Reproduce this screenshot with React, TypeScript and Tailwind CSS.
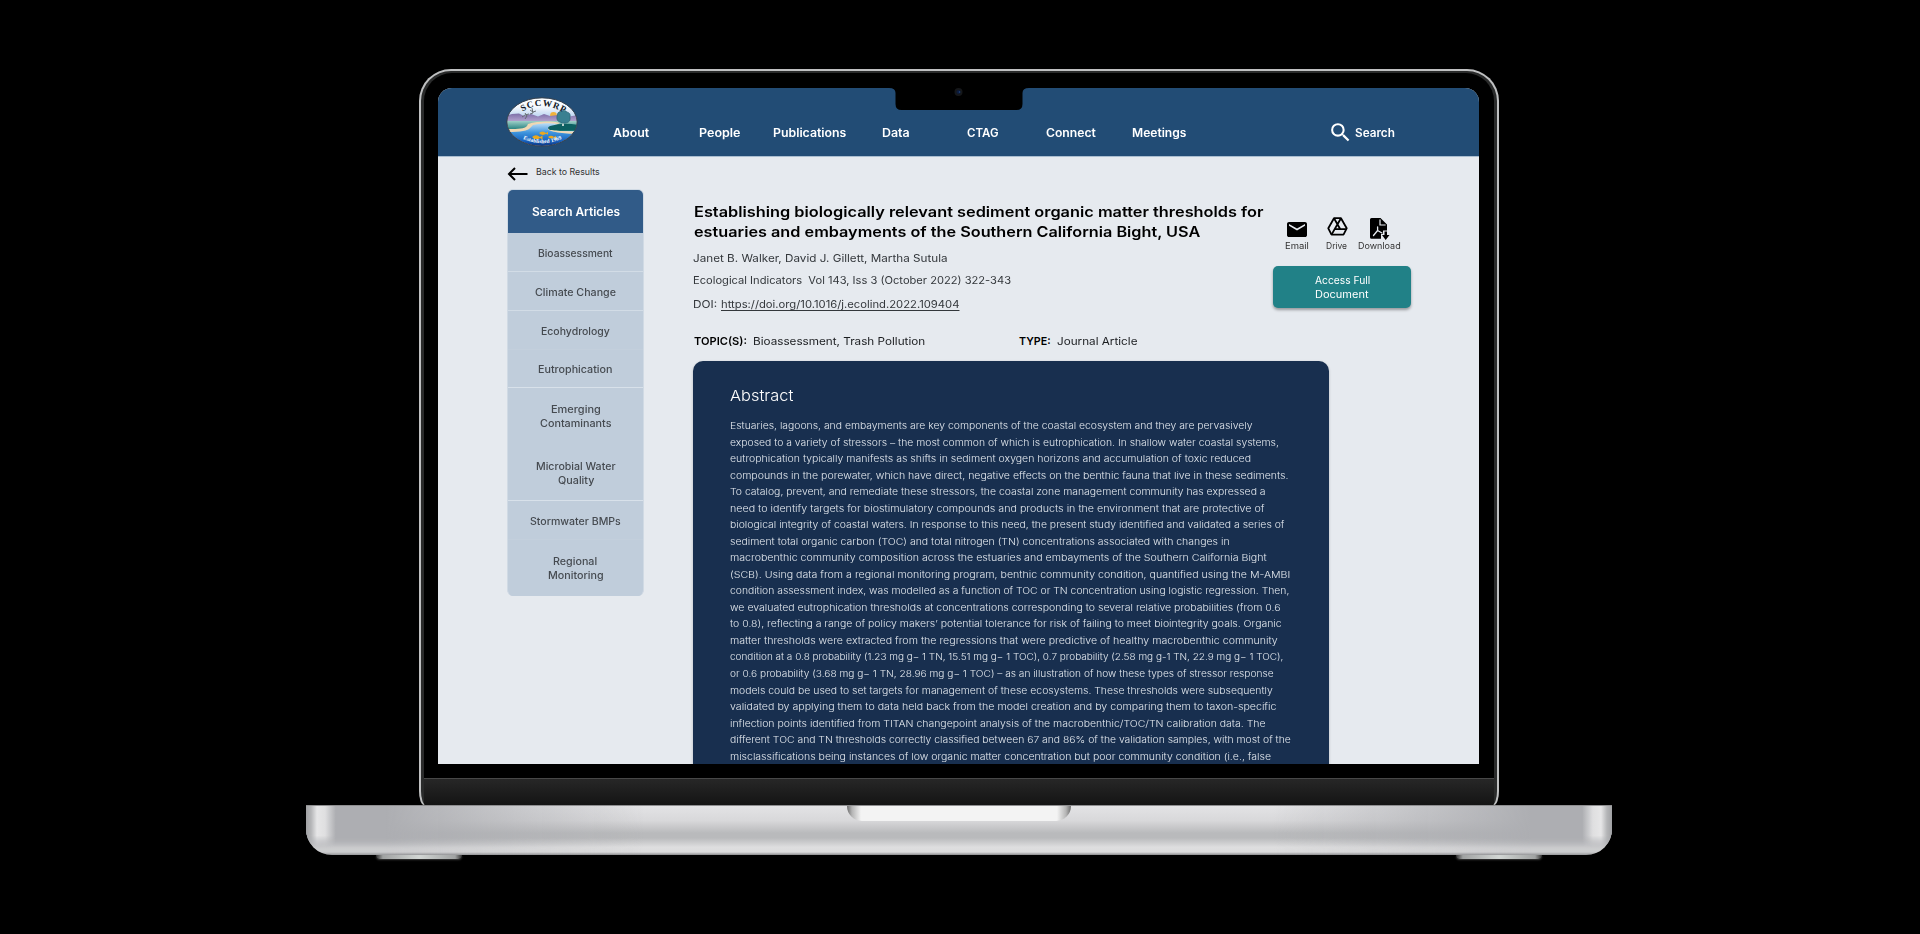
import { useLayoutEffect, useRef, useState } from "react";
import { MdEmail, MdSearch } from "react-icons/md";

type FitProps = { w: number; children: string; className?: string; textClass?: string };

/* One line of text, stretched horizontally to fill exactly `w` pixels. */
function Fit({ w, children, className = "", textClass = "" }: FitProps) {
  const ref = useRef<HTMLSpanElement>(null);
  const [scale, setScale] = useState(1);
  useLayoutEffect(() => {
    if (ref.current) setScale(w / ref.current.offsetWidth);
  }, [w, children]);
  return (
    <span className={`block shrink-0 whitespace-pre ${className}`} style={{ width: w }}>
      <span
        ref={ref}
        className={`inline-block origin-left align-top ${textClass}`}
        style={{ transform: `scaleX(${scale})` }}
      >
        {children}
      </span>
    </span>
  );
}

function Logo() {
  return (
    <svg viewBox="0 0 72 50" className="h-[50px] w-[72px]">
      <defs>
        <clipPath id="oval">
          <ellipse cx="36" cy="25" rx="35" ry="24" />
        </clipPath>
        <linearGradient id="sky" x1="0" y1="0" x2="0" y2="1">
          <stop offset="0" stopColor="#ffffff" />
          <stop offset="0.2" stopColor="#f4f8fd" />
          <stop offset="0.4" stopColor="#b9d3f0" />
        </linearGradient>
        <linearGradient id="hills" x1="0" y1="0" x2="0" y2="1">
          <stop offset="0" stopColor="#7d6fa8" />
          <stop offset="1" stopColor="#c5b4dc" />
        </linearGradient>
        <linearGradient id="land" x1="0" y1="0" x2="0" y2="1">
          <stop offset="0" stopColor="#9fd0c8" />
          <stop offset="1" stopColor="#0e7272" />
        </linearGradient>
        <linearGradient id="water" x1="0" y1="0" x2="0" y2="1">
          <stop offset="0" stopColor="#b9dcf5" />
          <stop offset="0.4" stopColor="#3c93dd" />
          <stop offset="0.75" stopColor="#1761bd" />
          <stop offset="1" stopColor="#0c2a72" />
        </linearGradient>
        <path id="arcTop" d="M16.500 14.500 Q36 2.500 59 16.500" />
        <path id="arcBottom" d="M17 42 Q36 50.500 57 41.500" />
      </defs>
      <g clipPath="url(#oval)">
        <rect width="72" height="50" fill="url(#sky)" />
        <circle cx="47.5" cy="18.5" r="3.4" fill="#f1b33c" />
        <path d="M0 19 L6 17 L13 16.5 L18 19 L25 17 L32 19.5 L38 17 L44 19 L52 18 L60 20 L72 18 V27 H0Z" fill="url(#hills)" />
        <rect y="24" width="72" height="10" fill="url(#land)" />
        <path d="M22 27 C32 24 46 24 54 26 L44 31 C42 34 56 34 72 35 V50 H0 V32 C12 32 18 32 21 29Z" fill="#f0d8b4" />
        <path d="M27 28 C36 26 44 26 52 27 L42 31 C40 35 58 37 72 37 V50 H0 V35 C14 35 22 34 24 31Z" fill="url(#water)" />
        <path d="M44 29 Q58 25 72 28 V33 H44 Q40 31 44 29Z" fill="#0d5f61" />
        <path d="M57 21 V29" stroke="#e8eee9" strokeWidth="1.6" />
        <path d="M51 19 q0-4 4-5 q4-2 6 1 q4 1 3 5 q1 5-4 6 q-4 1-6-1 q-4-1-3-6Z" fill="#3a8091" stroke="#2b5f70" strokeWidth="0.6" />
        <g fill="none" stroke="#5d6468" strokeWidth="0.9">
          <path d="M16 20 l3-2 l4-1 M19 16 l2 3 l-2 3" />
          <path d="M24 13 l3 2 l3-1 M26 11 l1 5 l-3 1" />
        </g>
        <g fill="#eba81d">
          <path d="M33 36 q3.500-3 7 0 l2-1.200 v3 l-2-1 q-3.500 2.500-7-.8Z" />
          <path d="M26 40 q4-3.500 8 0 l2.500-1.500 v4 l-2.500-1.500 q-4 3-8-1Z" />
          <path d="M42 40 q3-2.500 6 0 l2-1.200 v3 l-2-1.200 q-3 2.200-6-.6Z" />
        </g>
      </g>
      <text className="font-['Liberation_Serif'] text-[9px] font-bold" fill="#111827">
        <textPath href="#arcTop" textLength="44">SCCWRP</textPath>
      </text>
      <text className="font-['Liberation_Serif'] text-[5.500px] font-bold" fill="#ffffff">
        <textPath href="#arcBottom" textLength="40">Established 1969</textPath>
      </text>
      <ellipse cx="36" cy="25" rx="35.2" ry="24.200" fill="none" stroke="#39434f" strokeWidth="1" />
    </svg>
  );
}

function DriveIcon() {
  return (
    <svg viewBox="0 0 21 19" className="h-[19px] w-[21px]" fill="none" stroke="#000" strokeWidth="1.800" strokeLinejoin="round">
      <path d="M7 1.200 H14 L19.700 11.300 L16.500 17.600 H4.500 L1.300 11.300 Z" />
      <path d="M7 1.200 L13.300 12.200 H19.300 M14 1.200 L10.500 7.300 L4.500 17.600 M7.500 12.200 H13.300" />
    </svg>
  );
}

function DownloadIcon() {
  return (
    <svg viewBox="0 0 20 22" className="h-[22px] w-[20px]">
      <path d="M1.500 0 H10.500 L17 6.500 V12.500 H13 V16 H11 V20.700 H1.500 Q0 20.700 0 19.200 V1.500 Q0 0 1.500 0Z" fill="#000" />
      <path d="M10 1.500 V7 H15.600" fill="none" stroke="#e6eaef" strokeWidth="1.200" />
      <path d="M7.600 9 V12.500 M7.600 12.500 L3.500 17.500 M7.600 12.500 L12 15" fill="none" stroke="#e6eaef" strokeWidth="1.300" strokeLinecap="round" />
      <path d="M14.500 13.500 H17 V17 H19.500 L15.700 22 L12 17 H14.500Z" fill="#000" />
    </svg>
  );
}

const nav: { label: string; w: number; gap: string }[] = [
  { label: "About", w: 36, gap: "ml-[35px]" },
  { label: "People", w: 41, gap: "ml-[50px]" },
  { label: "Publications", w: 73, gap: "ml-[32.500px]" },
  { label: "Data", w: 27.5, gap: "ml-[36px]" },
  { label: "CTAG", w: 31.5, gap: "ml-[58px]" },
  { label: "Connect", w: 49.5, gap: "ml-[47.500px]" },
  { label: "Meetings", w: 54.5, gap: "ml-[36.500px]" },
];

const topics: { lines: [string, number][]; cls: string }[] = [
  { lines: [["Bioassessment", 75]], cls: "h-[39px] border-[#d2dce6]" },
  { lines: [["Climate Change", 81]], cls: "h-[39px] border-[#d2dce6]" },
  { lines: [["Ecohydrology", 69]], cls: "h-[39px] border-[#c3cfdc]" },
  { lines: [["Eutrophication", 75]], cls: "h-[38px] border-[#d8e1ea]" },
  { lines: [["Emerging", 50], ["Contaminants", 72]], cls: "h-[57px] pb-px border-[#c0cddb]" },
  { lines: [["Microbial Water", 79.5], ["Quality", 36]], cls: "h-[56px] border-[#d8e1ea]" },
  { lines: [["Stormwater BMPs", 91]], cls: "h-[39px] border-[#c3cfdc]" },
  { lines: [["Regional", 44.5], ["Monitoring", 55.5]], cls: "h-[56px] border-[#c0cddb]" },
];

const abstract: [string, number][] = [
  ["Estuaries, lagoons, and embayments are key components of the coastal ecosystem and they are pervasively", 522.5],
  ["exposed to a variety of stressors – the most common of which is eutrophication. In shallow water coastal systems,", 548.5],
  ["eutrophication typically manifests as shifts in sediment oxygen horizons and accumulation of toxic reduced", 521],
  ["compounds in the porewater, which have direct, negative effects on the benthic fauna that live in these sediments.", 558.5],
  ["To catalog, prevent, and remediate these stressors, the coastal zone management community has expressed a", 536],
  ["need to identify targets for biostimulatory compounds and products in the environment that are protective of", 534],
  ["biological integrity of coastal waters. In response to this need, the present study identified and validated a series of", 555],
  ["sediment total organic carbon (TOC) and total nitrogen (TN) concentrations associated with changes in", 499.5],
  ["macrobenthic community composition across the estuaries and embayments of the Southern California Bight", 537],
  ["(SCB). Using data from a regional monitoring program, benthic community condition, quantified using the M-AMBI", 560],
  ["condition assessment index, was modelled as a function of TOC or TN concentration using logistic regression. Then,", 559],
  ["we evaluated eutrophication thresholds at concentrations corresponding to several relative probabilities (from 0.6", 551],
  ["to 0.8), reflecting a range of policy makers’ potential tolerance for risk of failing to meet biointegrity goals. Organic", 551.5],
  ["matter thresholds were extracted from the regressions that were predictive of healthy macrobenthic community", 548],
  ["condition at a 0.8 probability (1.23 mg g− 1 TN, 15.51 mg g− 1 TOC), 0.7 probability (2.58 mg g-1 TN, 22.9 mg g− 1 TOC),", 553.5],
  ["or 0.6 probability (3.68 mg g− 1 TN, 28.96 mg g− 1 TOC) – as an illustration of how these types of stressor response", 543.5],
  ["models could be used to set targets for management of these ecosystems. These thresholds were subsequently", 543],
  ["validated by applying them to data held back from the model creation and by comparing them to taxon-specific", 546.5],
  ["inflection points identified from TITAN changepoint analysis of the macrobenthic/TOC/TN calibration data. The", 536],
  ["different TOC and TN thresholds correctly classified between 67 and 86% of the validation samples, with most of the", 561],
  ["misclassifications being instances of low organic matter concentration but poor community condition (i.e., false", 541],
];

function Header() {
  return (
    <header className="flex h-[69px] shrink-0 items-start border-b border-[#a9bdd0] bg-[#224c75] text-[11.300px] font-semibold text-white">
      <div className="pl-[68px] pt-[9px]">
        <Logo />
      </div>
      <nav className="flex pt-[35px] leading-[20px]">
        {nav.map((n) => (
          <a key={n.label} className={n.gap}>
            <Fit w={n.w}>{n.label}</Fit>
          </a>
        ))}
      </nav>
      <div className="ml-auto flex items-start pr-[85px] pt-[35px] leading-[20px]">
        <MdSearch className="-mt-[3px] mr-[2px] h-[25px] w-[25px]" />
        <Fit w={39.5}>Search</Fit>
      </div>
    </header>
  );
}

function Sidebar() {
  return (
    <aside className="ml-[69px] w-[137px] shrink-0">
      <a className="flex h-[32px] items-center pt-[1px] text-[8.800px] text-[#333]">
        <svg viewBox="0 0 21 14" className="h-[14px] w-[21px]" fill="none" stroke="#000" strokeWidth="2">
          <path d="M20.500 7 H2 M8 1 L2 7 L8 13" />
        </svg>
        <Fit w={64} className="-mt-[3px] ml-[8px]">Back to Results</Fit>
      </a>
      <div className="overflow-hidden rounded-[6px] border-x border-t border-[#d0dae4] bg-[#c0cddb]">
        <div className="-mx-px -mt-px flex h-[44px] items-center justify-center bg-[#315b88] pt-[2px] text-[11.300px] font-semibold text-white">
          <Fit w={87.5}>Search Articles</Fit>
        </div>
        {topics.map((t) => (
          <div
            key={t.lines[0][0]}
            className={`flex flex-col items-center justify-center border-b pt-[1.500px] text-[9.900px] font-medium leading-[14.500px] text-[#454a50] ${t.cls}`}
          >
            {t.lines.map(([s, w]) => (
              <Fit key={s} w={w}>{s}</Fit>
            ))}
          </div>
        ))}
      </div>
    </aside>
  );
}

function Article() {
  return (
    <article className="ml-[49px] flex w-[636px] shrink-0 flex-col">
      <h1 className="pl-px pt-[46px] text-[14.600px] font-[560] leading-[19.500px] text-black">
        <Fit w={569.5}>Establishing biologically relevant sediment organic matter thresholds for</Fit>
        <Fit w={506.5}>estuaries and embayments of the Southern California Bight, USA</Fit>
      </h1>
      <div className="mt-[6px] text-[10.600px] leading-[22px] text-[#33373b]">
        <Fit w={255}>Janet B. Walker, David J. Gillett, Martha Sutula</Fit>
        <Fit w={318}>{"Ecological Indicators  Vol 143, Iss 3 (October 2022) 322-343"}</Fit>
        <div className="mt-[1.500px] flex">
          <Fit w={24.5}>DOI:</Fit>
          <a className="ml-[3px]">
            <Fit w={238} textClass="underline underline-offset-[2px] [text-decoration-skip-ink:none]">
              https://doi.org/10.1016/j.ecolind.2022.109404
            </Fit>
          </a>
        </div>
      </div>
      <div className="mt-[15.500px] flex pl-px text-[10.700px] leading-[22px] text-[#1b1d20]">
        <Fit w={53} className="font-semibold text-black">TOPIC(S):</Fit>
        <Fit w={172} className="ml-[6px]">Bioassessment, Trash Pollution</Fit>
        <Fit w={32} className="ml-[94px] font-semibold text-black">TYPE:</Fit>
        <Fit w={81} className="ml-[5.500px]">Journal Article</Fit>
      </div>
      <section className="mt-[8px] h-[440px] rounded-t-[10px] bg-[#182f4f] pl-[37px] pt-[24px] text-[#e4e9ef] shadow-[0_1px_3px_rgba(0,0,0,0.2)]">
        <h2 className="text-[15px] font-light leading-[22px] text-white">
          <Fit w={63.500}>Abstract</Fit>
        </h2>
        <div className="mt-[11px] text-[9.400px] font-light leading-[16.530px]">
          {abstract.map(([s, w]) => (
            <Fit key={s} w={w}>{s}</Fit>
          ))}
        </div>
      </section>
    </article>
  );
}

function Actions() {
  return (
    <div className="-ml-[56px] w-[138px] shrink-0 pt-[60px]">
      <div className="flex pl-[12px] text-[8.700px] leading-[11px] text-[#333]">
        <div className="flex w-[24px] flex-col items-center">
          <MdEmail className="mt-[5px] h-[15px] w-[20px] text-black" preserveAspectRatio="none" viewBox="2 4 20 16" />
          <Fit w={24} className="mt-[4px]">Email</Fit>
        </div>
        <div className="ml-[17px] flex w-[22px] flex-col items-center">
          <DriveIcon />
          <Fit w={21.5} className="mt-[5px]">Drive</Fit>
        </div>
        <div className="ml-[10px] flex w-[43px] flex-col items-center">
          <div className="mb-[-1px] mt-px h-[22px]">
            <DownloadIcon />
          </div>
          <Fit w={42.5} className="mt-[2px]">Download</Fit>
        </div>
      </div>
      <button className="mt-[14px] flex h-[42px] w-[138px] flex-col justify-center rounded-[5px] bg-[#218187] pl-[42px] text-left text-[10px] leading-[14.300px] text-white shadow-[0_2px_3px_rgba(0,0,0,0.35)]">
        <Fit w={55.5}>Access Full</Fit>
        <Fit w={54}>Document</Fit>
      </button>
    </div>
  );
}

function Foot() {
  return (
    <div className="h-[4px] w-[86px] rounded-b-[4px] bg-[linear-gradient(90deg,#333,#a0a2a2_8%,#d2d6d4_50%,#a0a2a2_92%,#333)] shadow-[0_1px_2px_rgba(120,120,120,0.5)]" />
  );
}

export default function App() {
  return (
    <div className="flex h-[934px] w-full flex-col items-center overflow-hidden bg-black pr-[2px] pt-[69px] font-['Inter',sans-serif]">
      <div className="h-[736px] w-[1080px] rounded-t-[32px] bg-[#bfc0c1] p-[2px] pb-0 [border-bottom-left-radius:5px_14px] [border-bottom-right-radius:5px_14px]">
        <div className="h-[734px] overflow-hidden rounded-t-[30px] bg-[#2a2b2b] px-[3px] pt-[2px] [border-bottom-left-radius:5px_14px] [border-bottom-right-radius:5px_14px]">
          <div className="relative flex h-full flex-col rounded-t-[28px] bg-black pt-[15px]">
            <div className="ml-[14px] flex h-[676px] w-[1041px] flex-col overflow-hidden rounded-t-[14px] bg-[#e6eaef]">
              <Header />
              <main className="flex min-h-0 flex-1 items-start overflow-hidden">
                <Sidebar />
                <Article />
                <Actions />
              </main>
            </div>
            <div className="mt-[14px] h-[27px] border-t border-[#484848] bg-linear-to-b from-[#272727] to-[#141414]" />
            <svg viewBox="0 0 140 26" className="absolute left-1/2 top-[11px] h-[26px] w-[140px] -translate-x-1/2">
              <path d="M0 0 H140 V4 Q133.500 4 133.500 9 V20 Q133.500 26 127.500 26 H12.500 Q6.500 26 6.500 20 V9 Q6.500 4 0 4Z" fill="#000" />
              <circle cx="69.500" cy="8" r="4" fill="#15171a" />
              <circle cx="69.500" cy="8" r="2" fill="#0c1a3a" />
              <circle cx="70.500" cy="8" r="0.800" fill="#234a8a" />
            </svg>
          </div>
        </div>
      </div>
      <div className="relative flex h-[50px] w-[1306px] justify-center overflow-hidden rounded-b-[26px] border-t border-[#8e8e90] bg-[linear-gradient(180deg,#e3e3e5_0%,#d8d8da_30%,#b9babc_55%,#b9babc_65%,#dededf_84%,#dcdcdd_94%,#8b8b8d_100%)]">
        <div className="absolute inset-0 bg-[linear-gradient(90deg,#adaeb2_0,#adaeb2_80px,transparent_340px,transparent_966px,#adaeb2_1226px,#adaeb2_100%)] mask-[linear-gradient(180deg,#000_0%,#000_65%,rgba(0,0,0,0.35)_88%)]" />
        <div className="absolute inset-0 bg-[linear-gradient(90deg,#a0a1a4_0,#b4b5b7_5px,#e6e6e7_11px,#dfdfe0_19px,transparent_30px,transparent_1276px,#dfdfe0_1287px,#e6e6e7_1295px,#b4b5b7_1301px,#a0a1a4_100%)] mask-[linear-gradient(180deg,#000_0%,#000_60%,transparent_85%)]" />
        <div className="relative h-[15px] w-[224px] rounded-b-[15px] bg-[linear-gradient(90deg,#6d6d6d_0,#b5b5b5_5px,#f3f3f3_14px,#f3f3f3_210px,#b5b5b5_219px,#6d6d6d_100%)]" />
      </div>
      <div className="flex w-[1166px] justify-between">
        <Foot />
        <Foot />
      </div>
    </div>
  );
}
